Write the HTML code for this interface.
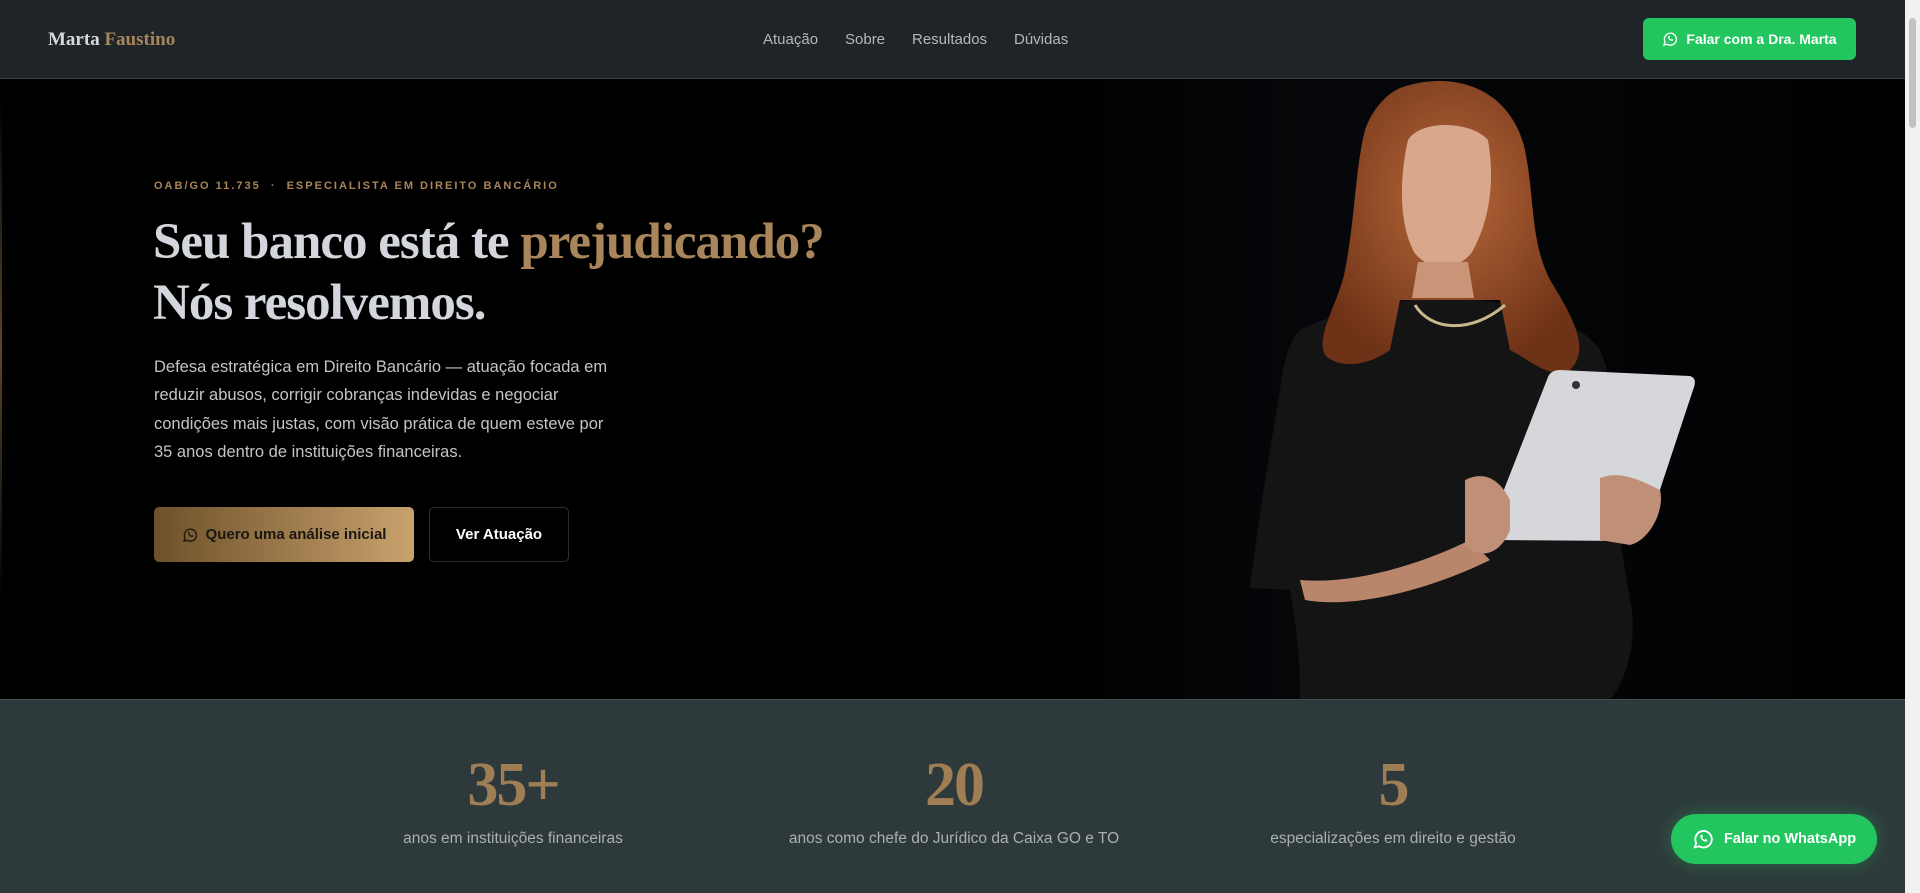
<!DOCTYPE html>
<html><head><meta charset="utf-8"><style>
*{margin:0;padding:0;box-sizing:border-box}
html,body{width:1920px;height:893px;overflow:hidden;background:#000;font-family:"Liberation Sans",sans-serif}
.nav{position:absolute;left:0;top:0;width:1905px;height:79px;background:#1e2427;border-bottom:1px solid #3a3f42}
.logo{position:absolute;left:48px;top:29px;font-family:"Liberation Serif",serif;font-weight:bold;font-size:19px;color:#d8d8d8}
.logo span{color:#a8855a}
.links a{position:absolute;top:31px;font-size:15px;color:#b4b8bc;text-decoration:none}
.btn-g{position:absolute;left:1643px;top:18px;width:213px;height:42px;background:#22c55e;border-radius:6px;color:#fff;font-weight:bold;font-size:14px;display:flex;align-items:center;justify-content:center;gap:8px}
.hero{position:absolute;left:0;top:80px;width:1905px;height:619px;background:linear-gradient(90deg,#000 0%,#000 55%,#05070a 70%,#000 100%)}
.edge{position:absolute;left:0;top:100px;width:2px;height:500px;background:linear-gradient(#000,#5a4630,#000)}
.eyebrow{position:absolute;left:154px;top:180px;font-size:11px;font-weight:bold;letter-spacing:2px;color:#a8855a}
h1{position:absolute;left:153px;top:212px;font-family:"Liberation Serif",serif;font-weight:bold;font-size:51px;line-height:61px;color:#d3d6dc;letter-spacing:-1px}
h1 span{color:#a8855a}
.p{position:absolute;left:154px;top:353px;width:470px;font-size:16.5px;line-height:28.3px;color:#c2c4c8}
.b1{position:absolute;left:154px;top:507px;width:260px;height:55px;border-radius:5px;background:linear-gradient(90deg,#6e5029,#c9a26e);color:#1a1610;font-weight:bold;font-size:15px;display:flex;align-items:center;justify-content:center;gap:8px}
.b2{position:absolute;left:429px;top:507px;width:140px;height:55px;border-radius:5px;border:1px solid #2e2e2e;color:#fff;font-weight:bold;font-size:15px;display:flex;align-items:center;justify-content:center}
.stats{position:absolute;left:0;top:699px;width:1905px;height:194px;background:#2e393b;border-top:1px solid #44504f}
.st{position:absolute;top:50px;width:440px;margin-left:-220px;text-align:center}
.st b{display:block;font-family:"Liberation Serif",serif;font-size:62px;line-height:70px;color:#a07e55;font-weight:bold;letter-spacing:-2px}
.st i{display:block;font-style:normal;font-size:15.5px;color:#a9b0b2;margin-top:10px}
.fw{position:absolute;left:1671px;top:814px;width:206px;height:50px;border-radius:25px;background:#22c55e;box-shadow:0 0 18px rgba(34,197,94,.35);color:#fff;font-weight:bold;font-size:14.5px;display:flex;align-items:center;justify-content:center;gap:10px}
.sb{position:absolute;left:1905px;top:0;width:15px;height:893px;background:#f1f1f1}
.thumb{position:absolute;left:1909px;top:18px;width:7px;height:110px;border-radius:4px;background:#c1c1c1}
</style></head><body>
<div class="hero"></div>
<div class="edge"></div>
<svg style="position:absolute;left:0;top:0" width="1905" height="893" viewBox="0 0 1905 893">
<defs><radialGradient id="hair" cx="50%" cy="40%" r="60%"><stop offset="0" stop-color="#b8683a"/><stop offset="1" stop-color="#6e3216"/></radialGradient></defs>
<path d="M1300 330 C1340 310 1380 305 1410 300 L1480 300 C1520 305 1580 320 1600 350 C1620 400 1620 440 1610 480 L1630 600 C1640 650 1620 690 1610 699 L1300 699 C1300 650 1295 620 1290 590 L1250 588 C1258 520 1270 450 1280 390 C1285 355 1290 340 1300 330Z" fill="#141414"/>
<path d="M1400 88 C1450 70 1510 85 1525 150 C1535 200 1530 240 1550 280 C1575 320 1590 350 1570 370 C1550 380 1530 360 1510 350 L1500 300 L1400 300 L1390 350 C1370 365 1340 370 1325 355 C1315 335 1340 300 1345 270 C1355 220 1355 170 1365 130 C1372 110 1385 95 1400 88Z" fill="url(#hair)"/>
<path d="M1408 140 C1420 120 1470 120 1488 140 C1495 180 1490 220 1472 252 C1458 272 1428 272 1414 252 C1398 222 1400 175 1408 140Z" fill="#d9a88c"/>
<path d="M1418 262 L1468 262 L1474 298 L1412 298Z" fill="#c99478"/>
<path d="M1300 580 C1360 585 1430 560 1470 540 L1490 560 C1440 585 1360 610 1305 600Z" fill="#b9866c"/>
<path d="M1415 305 C1430 330 1470 335 1505 305" stroke="#c9b98a" stroke-width="3" fill="none"/>
<path d="M1560 370 L1690 376 C1697 378 1695 385 1693 390 L1645 535 C1642 540 1638 541 1632 541 L1495 540 C1488 540 1486 535 1489 528 L1548 377 C1550 372 1555 370 1560 370Z" fill="#d6d7db"/>
<circle cx="1576" cy="385" r="4" fill="#333"/>
<path d="M1465 480 C1485 470 1500 480 1510 500 L1510 530 C1500 555 1480 560 1465 545Z" fill="#c08f78"/>
<path d="M1600 478 C1620 470 1640 480 1660 490 C1665 510 1650 540 1630 545 L1600 540Z" fill="#c08f78"/>
</svg>
<div class="nav">
<div class="logo">Marta <span>Faustino</span></div>
<div class="links"><a style="left:763px">Atuação</a><a style="left:845px">Sobre</a><a style="left:912px">Resultados</a><a style="left:1014px">Dúvidas</a></div>
<div class="btn-g"><svg width="16" height="16" viewBox="0 0 24 24" fill="none" stroke="#fff" stroke-width="2"><path d="M3 21l1.6-4.6A9 9 0 1 1 8 20z"/><path d="M9 8c0 4 3 7 7 7l1-2-2-1-1 1c-1.5-.5-2.5-1.5-3-3l1-1-1-2z" fill="#fff" stroke="none"/></svg>Falar com a Dra. Marta</div>
</div>
<div class="eyebrow">OAB/GO 11.735 &nbsp;·&nbsp; ESPECIALISTA EM DIREITO BANCÁRIO</div>
<h1>Seu banco está te <span>prejudicando?</span><br>Nós resolvemos.</h1>
<div class="p">Defesa estratégica em Direito Bancário — atuação focada em reduzir abusos, corrigir cobranças indevidas e negociar condições mais justas, com visão prática de quem esteve por 35 anos dentro de instituições financeiras.</div>
<div class="b1"><svg width="16" height="16" viewBox="0 0 24 24" fill="none" stroke="#1a1610" stroke-width="2"><path d="M3 21l1.6-4.6A9 9 0 1 1 8 20z"/><path d="M9 8c0 4 3 7 7 7l1-2-2-1-1 1c-1.5-.5-2.5-1.5-3-3l1-1-1-2z" fill="#1a1610" stroke="none"/></svg>Quero uma análise inicial</div>
<div class="b2">Ver Atuação</div>
<div class="stats">
<div class="st" style="left:513px"><b>35+</b><i>anos em instituições financeiras</i></div>
<div class="st" style="left:954px"><b>20</b><i>anos como chefe do Jurídico da Caixa GO e TO</i></div>
<div class="st" style="left:1393px"><b>5</b><i>especializações em direito e gestão</i></div>
</div>
<div class="fw"><svg width="22" height="22" viewBox="0 0 24 24" fill="none" stroke="#fff" stroke-width="2"><path d="M3 21l1.6-4.6A9 9 0 1 1 8 20z"/><path d="M9 8c0 4 3 7 7 7l1-2-2-1-1 1c-1.5-.5-2.5-1.5-3-3l1-1-1-2z" fill="#fff" stroke="none"/></svg>Falar no WhatsApp</div>
<div class="sb"></div><div class="thumb"></div>
</body></html>
